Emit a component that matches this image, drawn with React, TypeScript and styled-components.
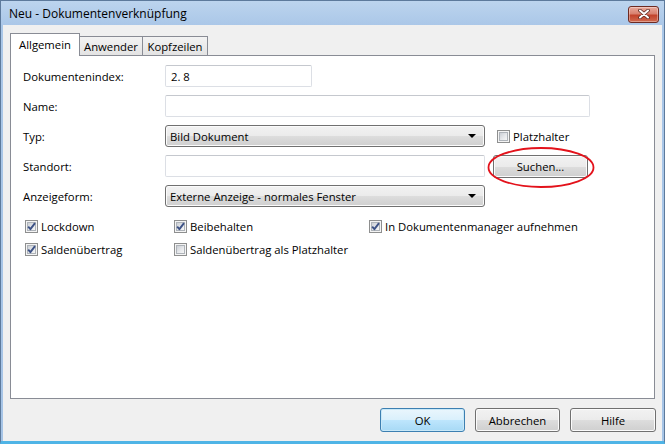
import styled, { createGlobalStyle } from "styled-components";

const GlobalStyle = createGlobalStyle`
  html, body {
    margin: 0;
    padding: 0;
    background: #ffffff;
  }
  body {
    font-family: "Segoe UI", "Open Sans", "Noto Sans", sans-serif;
    font-size: 11.3px;
    color: #000000;
  }
  * {
    box-sizing: border-box;
  }
`;

const Window = styled.div`
  width: 665px;
  height: 444px;
  display: flex;
  flex-direction: column;
  background: linear-gradient(#bcd4ee 0px, #aac7e8 25px, #a6c4e6 100%);
  border: 1px solid #5d7a9c;
  border-bottom: 3px solid #4fb4e6;
  padding: 0 2px 0 2px;
`;

const TitleBar = styled.div`
  height: 24px;
  display: flex;
  align-items: center;
  justify-content: space-between;
  padding: 0 3px 0 6px;
`;

const Title = styled.span`
  font-size: 12px;
  color: #000000;
`;

const CloseButton = styled.div`
  width: 31px;
  height: 17px;
  margin-top: 2px;
  border: 1px solid #6d2a22;
  border-radius: 3px;
  background: linear-gradient(#e9a99c 0%, #d8816f 45%, #c2432c 55%, #d06a4f 100%);
  box-shadow: inset 0 0 0 1px rgba(255, 255, 255, 0.35);
  display: flex;
  align-items: center;
  justify-content: center;
`;

const Client = styled.div`
  flex: 1;
  display: flex;
  flex-direction: column;
  background: #f0f0f0;
  padding: 8px 6px 9px 7px;
`;

const TabStrip = styled.div`
  display: flex;
  align-items: flex-end;
  height: 23px;
  margin-bottom: -1px;
  position: relative;
  z-index: 1;
`;

const Tab = styled.div<{ $active?: boolean; $w: number }>`
  width: ${(p) => p.$w}px;
  height: ${(p) => (p.$active ? 23 : 19)}px;
  margin-bottom: ${(p) => (p.$active ? 0 : 1)}px;
  margin-left: ${(p) => (p.$active ? 0 : -1)}px;
  border: 1px solid #898c95;
  border-bottom: none;
  background: ${(p) =>
    p.$active ? "#ffffff" : "linear-gradient(#f3f3f3, #e3e3e3)"};
  display: flex;
  align-items: center;
  justify-content: center;
  padding-bottom: ${(p) => (p.$active ? 2 : 0)}px;
  &:first-child {
    margin-left: 0;
  }
`;

const Panel = styled.div`
  flex: 1;
  margin-right: 1px;
  background: #ffffff;
  border: 1px solid #898c95;
  padding: 9px 12px;
  display: flex;
  flex-direction: column;
  gap: 8px;
`;

const FormRow = styled.div`
  display: flex;
  align-items: center;
  height: 22px;
`;

const Label = styled.div`
  width: 142px;
  flex-shrink: 0;
`;

const TextInput = styled.div<{ $w: number }>`
  width: ${(p) => p.$w}px;
  height: 22px;
  background: #ffffff;
  border: 1px solid #dcdfe5;
  border-top-color: #c5c8ce;
  border-radius: 2px;
  padding: 0 5px;
  display: flex;
  align-items: center;
`;

const Combo = styled.div`
  width: 320px;
  height: 22px;
  border: 1px solid #707070;
  border-radius: 3px;
  background: linear-gradient(#f2f2f2 0%, #ebebeb 50%, #dddddd 50%, #cfcfcf 100%);
  box-shadow: inset 0 0 0 1px #fbfbfb;
  display: flex;
  align-items: center;
  justify-content: space-between;
  padding: 0 4px 0 4px;
`;

const Arrow = styled.span`
  width: 0;
  height: 0;
  margin-right: 4px;
  border-left: 4px solid transparent;
  border-right: 4px solid transparent;
  border-top: 4px solid #000000;
`;

const Button = styled.div<{ $default?: boolean; $w: number; $h?: number }>`
  width: ${(p) => p.$w}px;
  height: ${(p) => p.$h ?? 23}px;
  border: 1px solid ${(p) => (p.$default ? "#3c7fb1" : "#707070")};
  border-radius: 3px;
  background: ${(p) =>
    p.$default
      ? "linear-gradient(#eaf6fd 0%, #d9f0fc 50%, #bee6fd 50%, #a7d9f5 100%)"
      : "linear-gradient(#f2f2f2 0%, #ebebeb 50%, #dddddd 50%, #cfcfcf 100%)"};
  box-shadow: inset 0 0 0 1px ${(p) => (p.$default ? "#c8e8f8" : "#fbfbfb")};
  display: flex;
  align-items: center;
  justify-content: center;
`;

const Spacer = styled.div<{ $w: number }>`
  width: ${(p) => p.$w}px;
  flex-shrink: 0;
`;

const Annotated = styled.div`
  position: relative;
  display: flex;
`;

const Ring = styled.svg`
  position: absolute;
  left: -6px;
  top: -8px;
  width: 108px;
  height: 41px;
  pointer-events: none;
  overflow: visible;
`;

const CheckGrid = styled.div`
  display: grid;
  grid-template-columns: 149px 195px auto;
  grid-auto-rows: 23px;
  margin-top: 0;
  padding-left: 2px;
`;

const CheckItem = styled.label`
  display: flex;
  align-items: center;
  gap: 3px;
`;

const Box = styled.span`
  width: 13px;
  height: 13px;
  flex-shrink: 0;
  border: 1px solid #8e8f8f;
  background: #f4f4f4;
  padding: 1px;
  display: flex;
`;

const BoxInner = styled.span`
  flex: 1;
  background: linear-gradient(135deg, #cbcfd5 0%, #e6e8eb 55%, #f6f6f6 100%);
  border: 1px solid #aeb3b9;
  position: relative;
`;

const Tick = styled.svg`
  position: absolute;
  left: -2px;
  top: -2px;
  width: 11px;
  height: 11px;
`;

const ButtonRow = styled.div`
  display: flex;
  justify-content: flex-end;
  gap: 10px;
  margin-top: 9px;
`;

const Check = ({ label, checked }: { label: string; checked?: boolean }) => (
  <CheckItem>
    <Box>
      <BoxInner>
        {checked && (
          <Tick viewBox="0 0 11 11">
            <path
              d="M2.2 5.6 L4.4 8.2 L9 2.2"
              fill="none"
              stroke="#3d5286"
              strokeWidth="1.9"
              strokeLinejoin="round"
            />
          </Tick>
        )}
      </BoxInner>
    </Box>
    {label}
  </CheckItem>
);

const App = () => (
  <>
    <GlobalStyle />
    <Window>
      <TitleBar>
        <Title>Neu - Dokumentenverknüpfung</Title>
        <CloseButton>
          <svg width="12" height="10" viewBox="0 0 12 10">
            <path
              d="M2 1.5 L10 8.5 M10 1.5 L2 8.5"
              stroke="#5b2a22"
              strokeWidth="3.6"
              strokeLinecap="round"
            />
            <path
              d="M2 1.5 L10 8.5 M10 1.5 L2 8.5"
              stroke="#ffffff"
              strokeWidth="2"
              strokeLinecap="round"
            />
          </svg>
        </CloseButton>
      </TitleBar>
      <Client>
        <TabStrip>
          <Tab $active $w={70}>Allgemein</Tab>
          <Tab $w={64}>Anwender</Tab>
          <Tab $w={66}>Kopfzeilen</Tab>
        </TabStrip>
        <Panel>
          <FormRow>
            <Label>Dokumentenindex:</Label>
            <TextInput $w={147}>2. 8</TextInput>
          </FormRow>
          <FormRow>
            <Label>Name:</Label>
            <TextInput $w={425} />
          </FormRow>
          <FormRow>
            <Label>Typ:</Label>
            <Combo>
              Bild Dokument
              <Arrow />
            </Combo>
            <Spacer $w={12} />
            <Check label="Platzhalter" />
          </FormRow>
          <FormRow>
            <Label>Standort:</Label>
            <TextInput $w={320} />
            <Spacer $w={8} />
            <Annotated>
              <Button $w={95}>Suchen...</Button>
              <Ring viewBox="0 0 108 41">
                <ellipse
                  cx="54"
                  cy="20.5"
                  rx="52.5"
                  ry="19.5"
                  fill="none"
                  stroke="#e3121b"
                  strokeWidth="1.8"
                />
              </Ring>
            </Annotated>
          </FormRow>
          <FormRow>
            <Label>Anzeigeform:</Label>
            <Combo>
              Externe Anzeige - normales Fenster
              <Arrow />
            </Combo>
          </FormRow>
          <CheckGrid>
            <Check label="Lockdown" checked />
            <Check label="Beibehalten" checked />
            <Check label="In Dokumentenmanager aufnehmen" checked />
            <Check label="Saldenübertrag" checked />
            <Check label="Saldenübertrag als Platzhalter" />
          </CheckGrid>
        </Panel>
        <ButtonRow>
          <Button $default $w={85} $h={24}>OK</Button>
          <Button $w={85} $h={24}>Abbrechen</Button>
          <Button $w={86} $h={24}>Hilfe</Button>
        </ButtonRow>
      </Client>
    </Window>
  </>
);

export default App;
